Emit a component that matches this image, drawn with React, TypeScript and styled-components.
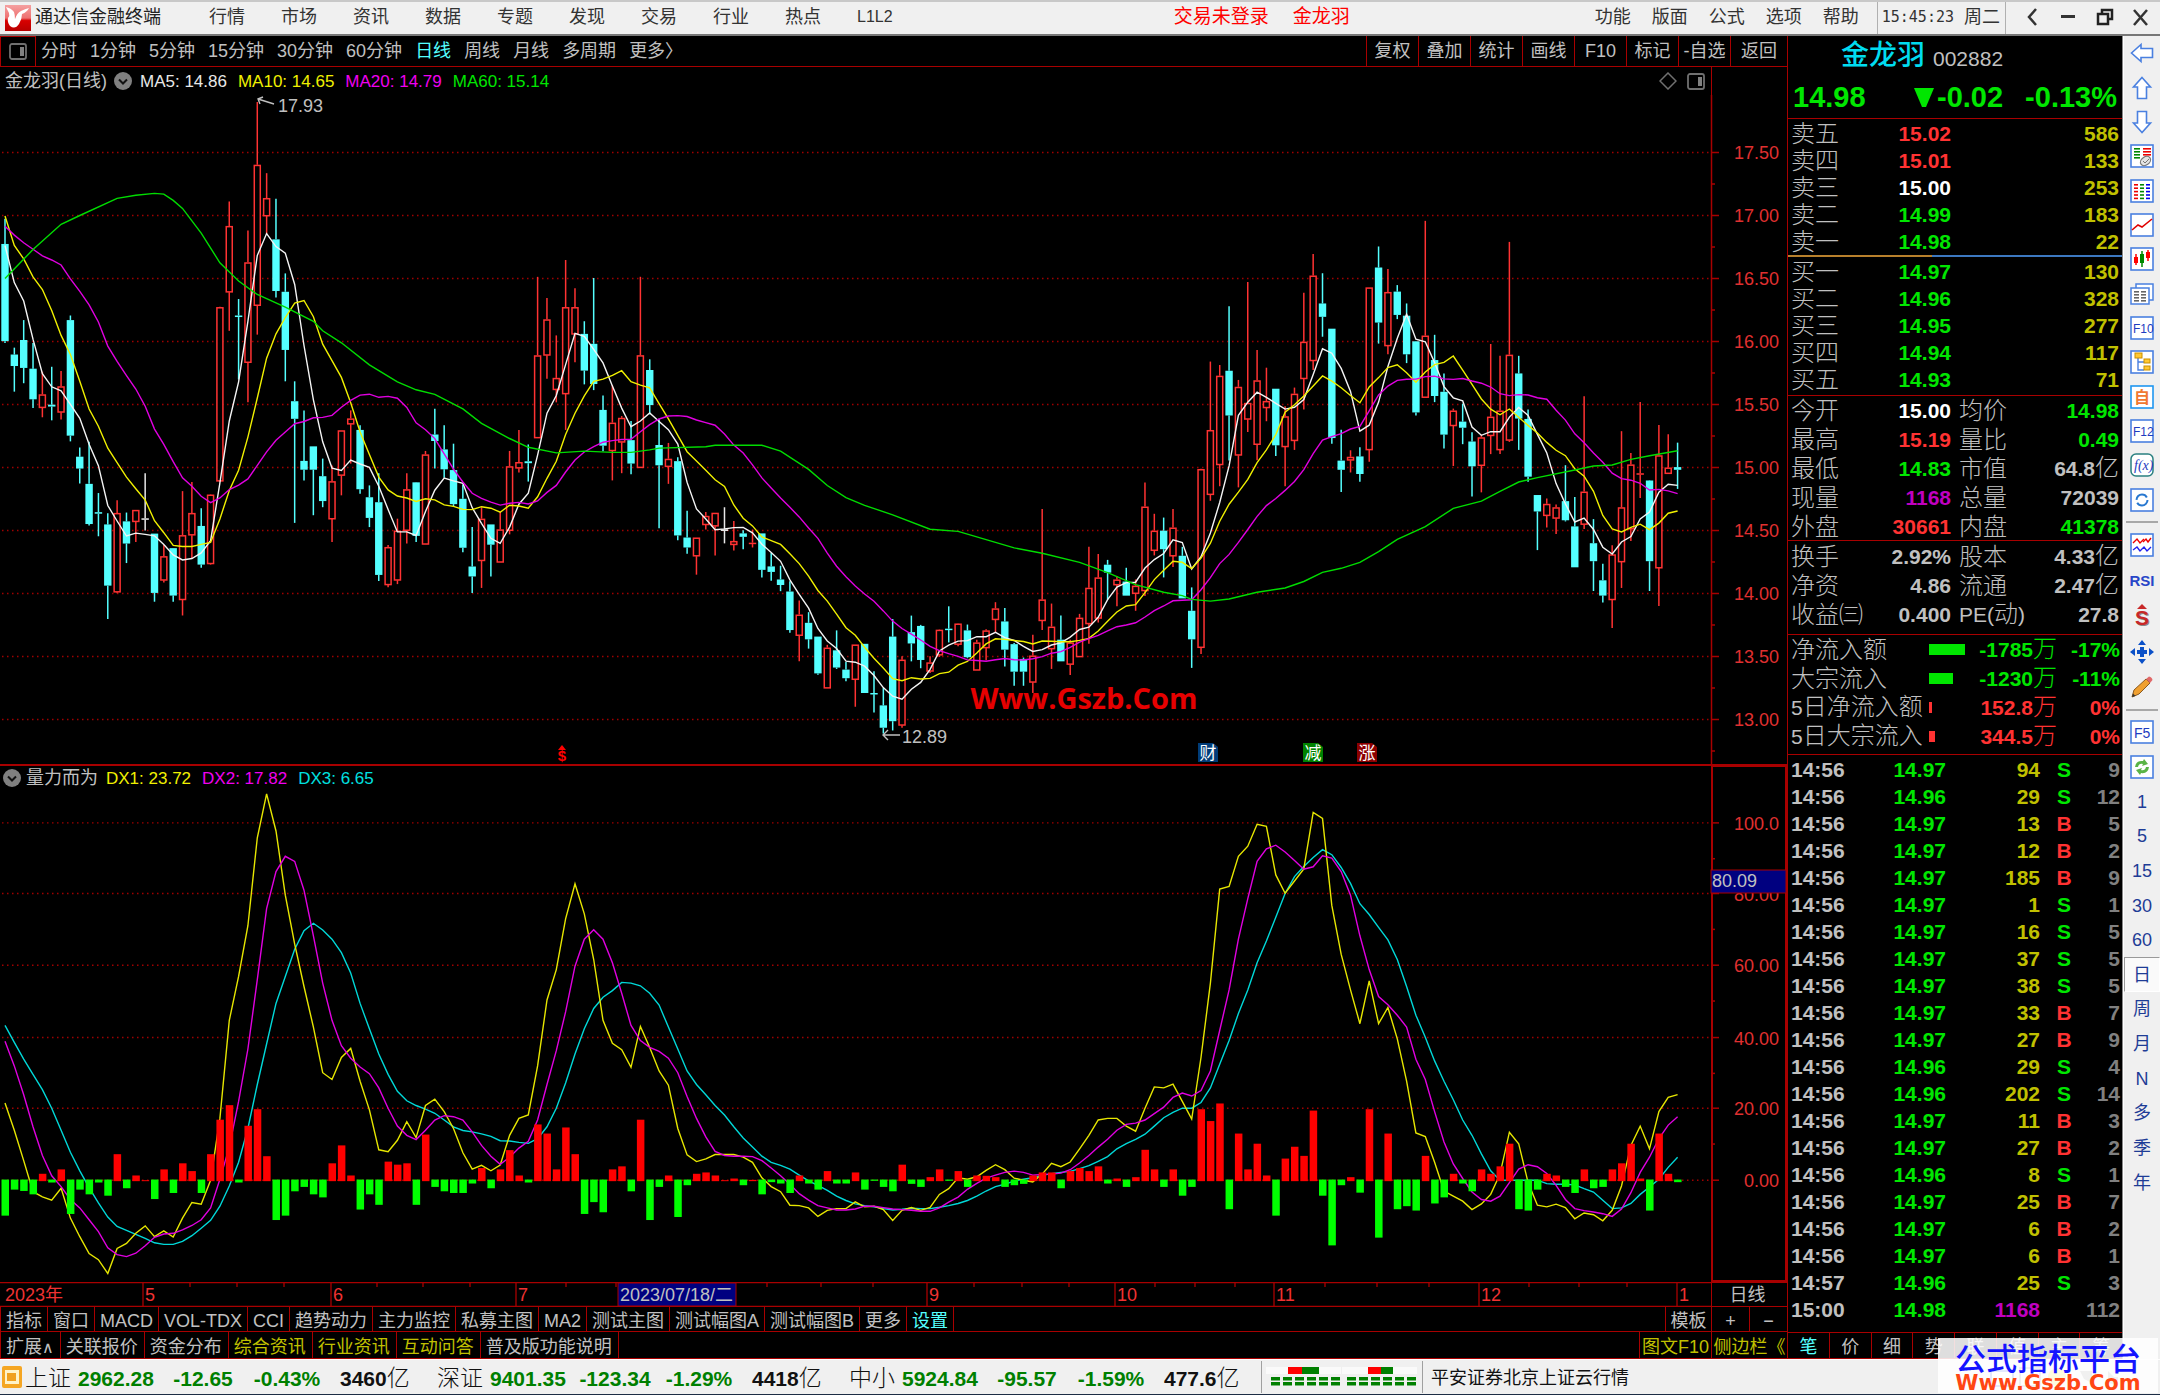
import React from "react";
import styled, { createGlobalStyle } from "styled-components";

/* ---------- palette ---------- */
const C = {
  line: "#a80000",
  red: "#ff3232",
  green: "#00e600",
  yellow: "#c0c000",
  magenta: "#c000c0",
  gray: "#c0c0c0",
  dim: "#808080",
  white: "#ffffff",
  cyan: "#54ffff",
  chrome: "#f0f0f0",
  navy: "#000080",
};
const SANS = `"Liberation Sans", "Noto Sans CJK SC", sans-serif`;

const GlobalStyle = createGlobalStyle`
  * { box-sizing: border-box; }
  body { margin: 0; background: #000; font-family: ${SANS}; font-size: 18px; color: ${C.gray}; }
  button { font: inherit; color: inherit; background: none; border: 0; padding: 0; margin: 0; white-space: nowrap; cursor: pointer; }
  table { border-collapse: collapse; border-spacing: 0; }
  th, td { padding: 0; font-weight: inherit; text-align: left; }
`;

/* ---------- price data ---------- */
// Quotes are kept as ticks below a reference price: [high, body top, body bottom, low, kind].
type Kind = "u" | "d" | "w";
type Quote = [number, number, number, number, Kind];
interface Block { ref: number; origin: number; perUnit: number; quotes: Quote[] }

const BLOCKS: Block[] = [
  {
    ref: 17.5, origin: 162, perUnit: 329.3,
    quotes: [
      [335,401,655,660,"d"],[672,690,720,787,"d"],[600,652,725,765,"d"],[660,727,807,830,"d"],[735,794,829,854,"u"],
      [722,821,826,862,"d"],[733,773,841,860,"u"],[588,600,902,917,"d"],[933,957,988,1027,"d"],[918,1028,1133,1137,"d"],
      [1052,1102,1106,1165,"d"],[1105,1134,1294,1381,"d"],[1071,1104,1311,1314,"u"],[1103,1126,1184,1235,"d"],[1096,1096,1127,1180,"u"],
      [1000,1118,1122,1150,"w"],[1158,1158,1313,1336,"d"],[1188,1217,1280,1286,"u"],[1196,1196,1320,1336,"d"],[1047,1162,1331,1372,"u"],
      [1023,1104,1162,1222,"u"],[1092,1138,1239,1247,"d"],[1055,1056,1237,1239,"u"],[565,566,1021,1023,"u"],[290,354,527,628,"u"],
      [545,588,592,755,"d"],[366,449,711,815,"u"],[30,194,562,638,"u"],[216,281,328,377,"u"],[283,389,524,541,"d"],
      [478,526,678,760,"d"],[760,812,858,1130,"d"],[836,968,991,1019,"d"],[930,930,991,1110,"d"],[962,1008,1073,1089,"d"],
      [980,1021,1120,1180,"u"],[888,888,1006,1058,"u"],[836,857,872,975,"u"],[875,887,1042,1054,"d"],[1032,1063,1117,1141,"d"],
      [1000,1076,1266,1282,"d"],[1188,1193,1292,1298,"u"],[1119,1150,1280,1290,"u"],[1000,1042,1150,1184,"u"],[1023,1024,1164,1180,"d"],
      [942,951,1186,1186,"u"],[832,899,916,988,"d"],[875,938,990,1012,"d"],[923,992,1081,1088,"d"],[1030,1067,1195,1207,"d"],
      [1141,1244,1270,1313,"d"],[1089,1119,1229,1300,"u"],[1134,1134,1187,1270,"d"],[1100,1147,1233,1233,"u"],[942,982,1150,1160,"u"],
      [887,971,987,998,"u"],[925,969,974,1022,"d"],[487,692,908,908,"u"],[542,598,692,753,"u"],[640,751,782,815,"u"],
      [443,566,793,887,"u"],[517,566,637,710,"u"],[603,636,732,768,"d"],[490,662,767,783,"d"],
    ],
  },
  {
    ref: 16.5, origin: 110, perUnit: 366.3,
    quotes: [
      [450,492,596,612,"d"],[420,529,611,697,"u"],[510,515,586,676,"u"],[524,580,648,679,"d"],[105,333,660,660,"u"],
      [345,376,478,505,"d"],[518,594,653,836,"d"],[588,634,657,707,"u"],[630,641,857,871,"d"],[785,863,892,910,"d"],
      [863,863,917,971,"u"],[789,800,826,840,"u"],[791,791,830,915,"u"],[775,839,844,880,"w"],[815,873,884,901,"u"],
      [842,851,861,897,"d"],[840,878,882,892,"u"],[851,851,957,979,"d"],[908,947,963,989,"d"],[945,985,1001,1019,"d"],
      [990,1020,1132,1140,"d"],[1046,1087,1148,1223,"u"],[1080,1111,1159,1186,"d"],[1151,1151,1258,1262,"d"],[1175,1183,1301,1301,"u"],
      [1133,1191,1241,1245,"d"],[1225,1247,1272,1281,"d"],[1174,1174,1276,1355,"u"],[1172,1172,1315,1315,"d"],[1252,1315,1319,1372,"d"],
      [1300,1351,1416,1433,"d"],[1100,1151,1397,1424,"d"],[1208,1218,1409,1416,"u"],[1090,1138,1171,1223,"d"],[1117,1120,1219,1243,"d"],
      [1208,1226,1252,1257,"u"],[1130,1131,1205,1210,"u"],[1063,1128,1132,1168,"d"],[1112,1113,1174,1179,"u"],[1116,1133,1211,1214,"d"],
      [1160,1168,1249,1249,"u"],[1130,1133,1184,1220,"u"],[1051,1069,1102,1140,"u"],[1068,1107,1189,1238,"d"],[1170,1173,1253,1294,"d"],
      [1212,1216,1253,1294,"d"],[1146,1206,1284,1315,"u"],[780,1043,1105,1132,"u"],[1055,1122,1187,1245,"u"],[1090,1160,1223,1223,"d"],
      [1160,1168,1232,1263,"u"],[1085,1096,1210,1210,"u"],[890,1009,1114,1172,"u"],[911,979,1098,1110,"u"],[928,942,965,1044,"d"],
      [975,985,1001,1063,"u"],[951,991,1032,1032,"d"],[985,1003,1026,1076,"u"],[703,773,1018,1033,"u"],[794,843,901,915,"u"],
      [805,843,897,979,"d"],[780,834,917,949,"u"],[890,916,1040,1040,"d"],[1008,1076,1159,1242,"d"],
    ],
  },
  {
    ref: 17, origin: 66, perUnit: 329.5,
    quotes: [
      [728,729,1196,1213,"u"],[448,627,796,812,"u"],[457,485,718,774,"u"],[303,472,589,707,"d"],[496,514,693,777,"u"],
      [240,556,599,632,"u"],[418,497,665,706,"u"],[464,551,569,604,"u"],[519,519,667,695,"d"],[565,591,671,774,"u"],
      [516,532,655,679,"u"],[268,396,493,573,"u"],[167,223,446,470,"u"],[217,296,331,383,"d"],[362,362,648,663,"d"],
      [626,707,731,789,"d"],[680,697,706,738,"u"],[672,696,742,762,"d"],[254,254,679,710,"u"],[147,202,346,401,"d"],
      [206,266,407,429,"u"],[248,265,326,337,"d"],[296,328,429,452,"d"],[394,395,581,589,"d"],[80,380,542,542,"u"],
      [378,444,538,554,"d"],[479,527,639,675,"d"],[571,576,616,721,"u"],[558,605,621,664,"d"],[633,657,722,801,"d"],
      [640,646,720,790,"u"],[402,592,642,690,"u"],[433,576,679,690,"u"],[135,430,654,658,"u"],[433,479,597,679,"d"],
      [573,598,749,762,"d"],[797,797,840,941,"d"],[806,820,851,882,"u"],[822,829,858,899,"u"],[719,813,863,866,"d"],
      [802,879,986,986,"d"],[539,788,874,886,"u"],[860,923,970,1048,"d"],[977,1020,1060,1078,"d"],[928,952,1071,1145,"u"],
      [630,829,972,1040,"u"],[687,717,886,917,"u"],[554,740,744,805,"u"],[758,759,970,1048,"d"],[614,693,988,1087,"u"],
      [638,725,741,741,"u"],[660,724,731,781,"d"],
    ],
  },
];

const toPrice = (b: Block, t: number) => b.ref - (t - b.origin) / b.perUnit;
const candles = BLOCKS.flatMap((b) =>
  b.quotes.map(([h, t, m, l, kind]) => ({
    high: toPrice(b, h), top: toPrice(b, t), bottom: toPrice(b, m), low: toPrice(b, l), kind,
    close: toPrice(b, kind === "u" ? t : m),
  }))
);

// Averages whose window reaches back before the first candle start from stored values.
const average = (n: number, head: number[]) =>
  candles.map((_, i) =>
    i < head.length
      ? toPrice(BLOCKS[0], head[i])
      : candles.slice(i - n + 1, i + 1).reduce((s, c) => s + c.close, 0) / n
  );
const MA5 = average(5, [405, 502, 550, 650]);
const MA10 = average(10, [328, 405, 440, 487, 520, 575, 640, 690, 760]);
const MA20 = average(20, [355, 378, 398, 415, 432, 443, 456, 492, 525, 560, 605, 668, 708, 745, 780, 825, 885, 925, 970]);
const MA60: [number, number][] = [
  [0,16.5],[3,16.73],[6,16.93],[8,17.0],[12,17.136],[14,17.16],[16,17.175],[17,17.17],[18,17.12],[19,17.056],[21,16.86],[23,16.625],
  [25,16.48],[27,16.373],[30,16.273],[33,16.16],[34,16.085],[36,15.99],[39,15.815],[42,15.68],[44,15.617],[46,15.58],[49,15.465],
  [51,15.35],[54,15.23],[56,15.16],[59,15.116],[62,15.13],[65,15.12],[67,15.12],[69,15.14],[70,15.154],[75,15.165],[76,15.176],
  [81,15.176],[83,15.13],[86,14.985],[88,14.857],[90,14.76],[92,14.7],[95,14.624],[99,14.51],[102,14.493],[108,14.362],[111,14.32],
  [115,14.248],[118,14.166],[121,14.07],[124,14.01],[126,13.983],[127,13.953],[129,13.94],[131,13.956],[134,14.01],[137,14.044],
  [139,14.095],[141,14.168],[143,14.2],[145,14.247],[147,14.332],[149,14.43],[152,14.53],[155,14.675],[158,14.733],[160,14.81],
  [162,14.885],[164,14.92],[168,14.98],[170,15.012],[172,15.02],[174,15.064],[176,15.094],[179,15.133],
];

/* ---------- indicator data: ticks down the pane, 1243 is the zero line ---------- */
const DX1 = [
  1015,1095,1185,1277,1292,1302,1267,1355,1410,1460,1478,1519,1445,1430,1400,1378,1410,1393,1411,1355,1309,1314,1243,1060,770,640,490,230,100,210,
  400,545,670,790,925,945,880,853,950,1035,1153,1159,1125,1070,1117,1022,1003,1040,1090,1162,1210,1199,1215,1198,1110,1060,1050,905,710,620,
  470,366,455,590,770,838,857,909,788,850,920,962,1090,1168,1188,1180,1167,1167,1167,1175,1190,1236,1262,1277,1317,1318,1325,1350,1332,1327,
  1327,1307,1322,1320,1330,1362,1332,1324,1332,1323,1285,1268,1236,1240,1233,1214,1197,1212,1237,1243,1248,1225,1193,1203,1189,1150,1110,1065,1060,1060,
  1083,1098,1030,967,970,959,1010,1062,880,660,382,374,285,255,190,196,340,394,358,322,155,173,430,575,680,780,653,780,732,825,
  950,1103,1114,1190,1275,1290,1305,1330,1313,1285,1225,1101,1135,1250,1317,1322,1314,1324,1357,1340,1345,1363,1332,1260,1140,1083,1150,1040,998,990,
];
const DX2 = [
  832,905,990,1085,1170,1230,1262,1300,1325,1360,1395,1443,1463,1469,1459,1437,1412,1402,1400,1390,1377,1360,1325,1240,1145,1010,855,650,440,330,
  285,300,385,520,660,770,845,882,908,928,970,1030,1083,1110,1123,1095,1065,1052,1055,1065,1100,1140,1172,1196,1175,1148,1128,1065,960,860,
  745,610,530,502,530,600,690,785,830,850,862,882,925,995,1060,1115,1158,1170,1172,1172,1173,1185,1207,1230,1255,1283,1302,1318,1325,1331,
  1331,1328,1320,1320,1324,1328,1330,1332,1335,1335,1325,1308,1293,1270,1252,1237,1228,1220,1216,1220,1228,1226,1225,1222,1212,1192,1170,1145,1122,1095,
  1078,1074,1065,1046,1027,998,985,994,978,920,800,680,530,410,300,263,252,272,297,323,316,283,290,330,400,520,620,700,724,755,
  790,885,945,1040,1130,1195,1238,1278,1300,1305,1290,1250,1210,1197,1203,1223,1258,1300,1327,1333,1337,1342,1350,1328,1280,1220,1175,1120,1080,1055,
];
const DX3 = [
  785,835,885,930,975,1030,1095,1160,1215,1265,1310,1352,1380,1391,1403,1415,1428,1433,1433,1424,1407,1385,1362,1320,1260,1190,1090,960,840,720,
  640,560,505,483,503,530,570,630,720,795,870,930,980,1008,1022,1033,1045,1065,1085,1096,1100,1106,1113,1126,1127,1131,1134,1120,1085,1030,
  955,870,795,735,702,682,658,660,668,690,725,790,855,920,960,990,1022,1050,1085,1118,1145,1172,1190,1199,1210,1228,1245,1258,1273,1290,
  1303,1313,1318,1322,1327,1331,1329,1326,1327,1327,1323,1318,1312,1303,1290,1275,1262,1255,1245,1240,1236,1228,1224,1220,1217,1209,1200,1187,1173,1150,
  1135,1122,1107,1083,1058,1042,1030,1030,1013,970,900,830,750,680,600,535,465,395,345,315,288,265,280,318,365,425,457,495,532,590,
  670,755,820,890,950,1005,1065,1110,1165,1215,1243,1243,1243,1243,1243,1253,1255,1255,1257,1268,1278,1302,1327,1325,1312,1285,1263,1240,1205,1175,
];
const FLOW = [
  -105,-28,-32,-42,20,-7,33,-100,-28,-42,-7,-46,78,-24,15,1,-56,33,-38,51,28,-38,78,180,223,-7,162,211,72,-118,
  -105,-33,-20,-42,-51,51,104,15,-87,-42,-73,56,47,51,-73,136,-20,-33,-38,-38,-10,37,-24,33,90,15,-7,166,139,33,
  157,78,-100,-65,-95,33,42,-33,180,-118,-20,15,-109,-15,20,24,15,1,6,-15,2,-42,-6,-10,-38,15,-10,-28,28,-10,
  -10,24,-28,-2,-20,-33,47,-11,-20,10,33,-2,28,-20,15,14,10,-20,-15,-11,15,24,24,-24,28,37,28,42,-10,6,
  -20,10,91,33,-20,33,-46,-20,211,176,228,-86,139,33,109,15,-105,65,100,73,207,-46,-193,-15,10,-37,211,-170,139,-86,
  -77,-90,73,-69,-51,20,-10,-33,33,20,42,109,-86,-90,-28,20,15,-20,-38,33,-24,-20,33,51,109,6,-90,139,20,-6,
];

/* ---------- chart geometry ---------- */
const AXIS_X = 1711;
const xAt = (i: number) => 5 + i * 9.344;
const priceY = (p: number) => 152.5 + (17.5 - p) * 126;
const tickY = (t: number) => 760 + t / 2.958;
const path = (pts: [number, number][]) => pts.map(([x, y]) => `${x.toFixed(1)},${y.toFixed(1)}`).join(" ");
const priceLine = (v: number[]) => path(v.map((p, i) => [xAt(i), priceY(p)]));
const tickLine = (v: number[]) => path(v.map((t, i) => [xAt(i), tickY(t)]));

/* ---------- styled parts ---------- */
const Page = styled.div`display: flex; flex-direction: column; min-height: 100vh; background: #000;`;

const TitleBar = styled.header`
  display: flex; align-items: center; height: 36px; padding-left: 5px; color: #333; line-height: 28px;
  background: ${C.chrome}; border-top: 2px solid #c8c8c8; border-bottom: 2px solid #777; white-space: nowrap;
`;
const TitleText = styled.div`display: flex; align-items: center; flex: 1; padding-bottom: 2px;`;
const AppName = styled.span`margin: 0 48px 0 4px; color: #222;`;
const Menu = styled.nav<{ $gap: number }>`display: flex; gap: ${(p) => p.$gap}px;`;
const SmallButton = styled.button`font-size: 16px;`;
const Alerts = styled.div`display: flex; gap: 24px; margin-left: auto; margin-right: 245px; color: #f00; font-size: 19px;`;
const Clock = styled.time`
  display: flex; align-items: center; gap: 10px; height: 32px; margin-left: 18px; padding: 0 5px 2px 4px; border: solid #b0b0b0; border-width: 0 1px;
  font-family: "DejaVu Sans Mono", "Noto Sans CJK SC", monospace; font-size: 15px;
  span { font-size: 18px; }
`;
const WindowButtons = styled.div`
  display: flex; width: 154px; padding: 0 1px 2px 8px; justify-content: space-between;
  button { display: grid; place-items: center; width: 36px; height: 30px; }
`;

const Body = styled.div`display: grid; grid-template-columns: minmax(0, 1fr) 336px 37px; flex: 1;`;
const Main = styled.main`display: flex; flex-direction: column; min-width: 0;`;

const Toolbar = styled.div`display: flex; height: 31px; border-bottom: 1px solid ${C.line};`;
const SideToggle = styled.button`display: grid; place-items: center; width: 36px; border: 1px solid ${C.line}; border-bottom: 0;`;
const Periods = styled.div`display: flex; gap: 13px; padding-left: 5px; flex: 1;`;
const Period = styled.button<{ $on?: boolean }>`line-height: 30px; color: ${(p) => (p.$on ? C.cyan : C.gray)};`;
const Tools = styled.div`
  display: flex;
  button { width: 52px; border-left: 1px solid ${C.line}; line-height: 30px; }
  button:last-child { width: 57px; }
`;

const Legend = styled.div<{ $h: number }>`
  display: flex; height: ${(p) => p.$h}px; line-height: ${(p) => p.$h}px; font-size: 17px; white-space: nowrap;
`;
const LegendText = styled.div`display: flex; align-items: baseline; gap: 11px; flex: 1; min-width: 0;`;
const LegendTitle = styled.span<{ $gap: number }>`
  display: flex; align-items: baseline; gap: ${(p) => p.$gap}px; padding-left: ${(p) => p.$gap - 2}px; font-size: 18px; margin-right: -3px;
  svg { align-self: center; }
`;
const Tint = styled.span<{ $c: string }>`color: ${(p) => p.$c};`;
const LegendIcons = styled.div`display: flex; align-items: center; gap: 10px; padding-right: 6px;`;
const AxisHead = styled.div<{ $boxed?: boolean }>`
  width: 76px; border-left: ${(p) => (p.$boxed ? 2 : 1)}px solid ${C.line};
  ${(p) => p.$boxed && `border-top: 1px solid ${C.line}; border-right: 2px solid ${C.line};`}
`;
const Pane = styled.section`border-bottom: 2px solid ${C.line};`;
const SubPane = styled.section``;
const Plot = styled.svg`
  display: block; width: 100%; height: auto; font-family: ${SANS}; font-size: 18px;
`;
const DateRow = styled.div`
  display: grid; grid-template-columns: minmax(0, 1fr) 76px;
  button { border: solid ${C.line}; border-width: 1px 0 1px 1px; line-height: 22px; padding: 1px 4px 0 0; }
`;

const TabRow = styled.div<{ $h: number; $pad: string }>`
  display: flex; height: ${(p) => p.$h}px; border-bottom: 1px solid ${C.line}; border-left: 1px solid ${C.line};
  button { padding: ${(p) => p.$pad}; border-right: 1px solid ${C.line}; line-height: ${(p) => p.$h - 5}px; }
`;
const Tab = styled.button<{ $c?: string }>`color: ${(p) => p.$c || C.gray};`;
const Caret = styled.span`font-family: "DejaVu Sans", sans-serif; font-size: 16px;`;
const TabEnd = styled.div<{ $cols: string }>`
  display: grid; grid-template-columns: ${(p) => p.$cols}; margin-left: auto;
  button { padding: 4px 0 0; border-right: 0; border-left: 1px solid ${C.line}; }
`;

const Quote = styled.aside`
  position: relative; display: flex; flex-direction: column; border-left: 1px solid ${C.line}; border-right: 1px solid #888;
  font-size: 21px; font-weight: bold;
`;
const StockHead = styled.div`height: 83px; border-bottom: 1px solid ${C.line}; color: ${C.green}; padding: 0 5px;`;
const StockName = styled.h1`
  display: flex; align-items: center; gap: 8px; margin: 0 0 0 48px; height: 39px; line-height: 37px; font-size: 28px; font-weight: 500; color: #00dcf0;
  small { font-size: 21px; color: ${C.gray}; padding-top: 6px; }
`;
const LastPrice = styled.div`
  display: flex; gap: 22px; align-items: center; height: 44px; padding-top: 1px; font-size: 29px;
  span { display: flex; align-items: center; }
  span:first-child { margin-right: auto; }
  svg { margin-right: 3px; }
`;
const Grid = styled.table<{ $row: number }>`
  width: 100%; table-layout: fixed;
  tr { height: ${(p) => p.$row}px; }
  td, th { line-height: 26px; white-space: nowrap; overflow: visible; }
`;
const Label = styled.th`&& { padding-left: 3px; font-size: 24px; font-weight: 300; color: ${C.gray}; b { font-size: 21px; } }`;
const FactLabel = styled(Label)`&& { padding-left: 8px; }`;
const Num = styled.td<{ $c?: string; $pad?: number }>`
  && { text-align: right; color: ${(p) => p.$c || C.gray}; padding-right: ${(p) => p.$pad ?? 3}px; font-weight: bold; }
  span { font-size: 24px; font-weight: 300; }
`;
const Side = styled.td<{ $c: string }>`&& { padding-left: 4px; text-align: center; color: ${(p) => p.$c}; }`;
const Time = styled.td`&& { padding-left: 3px; color: ${C.gray}; }`;
const Section = styled.div<{ $h: number; $top?: number }>`
  height: ${(p) => p.$h}px; padding-top: ${(p) => p.$top || 0}px; border-bottom: 1px solid ${C.line};
`;
const AskBox = styled.div`height: 136px; padding-top: 1px;`;
const DepthLine = styled.div`height: 2px; background: linear-gradient(to right, #b8802c 43%, #3c78c0 43%);`;
const FlowBar = styled.div<{ $c: string }>`height: 11px; background: ${(p) => p.$c};`;
const Ticks = styled.div`flex: 1; padding-top: 1px;`;
const QuoteTabs = styled.div`
  display: grid; grid-template-columns: repeat(8, 1fr); height: 27px; border: solid ${C.line}; border-width: 1px 0; font-size: 18px; font-weight: normal;
  button { border-right: 1px solid ${C.line}; line-height: 21px; padding-top: 4px; }
  button:first-child { color: ${C.cyan}; }
  button:last-child { border-right: 0; }
`;

const IconBar = styled.nav`background: ${C.chrome}; border-left: 1px solid #fff; color: #1e3c96;`;
const IconGroup = styled.div<{ $h: number }>`
  display: grid; grid-auto-rows: 1fr; height: ${(p) => p.$h}px;
`;
const Rule = styled.hr`height: 2px; margin: 4px 2px; border: 0; background: #a8a8a8;`;
const BarButton = styled.button<{ $on?: boolean }>`
  && { display: grid; place-items: center; line-height: 24px; }
  ${(p) => p.$on && `background: #fafafa; border: 1px solid #999; border-right-color: #fff; border-bottom-color: #fff;`}
`;

const StatusBar = styled.footer`
  display: flex; align-items: center; height: 36px; padding-left: 2px; color: #111; background: ${C.chrome};
  border-top: 1px solid #fff; border-bottom: 1px solid #1c2c44; white-space: nowrap;
`;
const StatusButton = styled.button`display: grid; margin-right: 3px;`;
const Index = styled.div`
  display: grid; align-items: baseline; grid-template-columns: 53px 84px 82px 86px 107px; line-height: 28px; padding-top: 2px;
  font-size: 21px; font-weight: bold;
  > :first-child, small { font-size: 23px; font-weight: 300; }
`;
const Down = styled.span<{ $mid?: boolean }>`color: #008000; text-align: ${(p) => (p.$mid ? "center" : "left")};`;
const Turnover = styled.span`padding-left: 10px;`;
const Meters = styled.div`display: flex; align-items: center; height: 32px; padding: 0 4px; border: solid #a0a0a0; border-width: 0 1px;`;
const Feed = styled.span`padding: 2px 0 0 8px; line-height: 28px;`;
const Tray = styled.svg`margin-left: auto; margin-right: 20px;`;
const Watermark = styled.div`
  position: absolute; right: 2px; bottom: 2px; width: 220px; height: 55px; padding-top: 3px; background: rgba(255, 255, 255, 0.87); text-align: center;
  font: bold 21px/22px "DejaVu Sans", sans-serif; color: #ff4614;
  div { font: 500 31px/31px "Noto Sans CJK SC", sans-serif; color: #1414ff; }
`;
const Frame = styled.div`position: relative;`;

/* ---------- small drawings ---------- */
const Logo = () => (
  <svg width="26" height="26" viewBox="0 0 26 26">
    <defs><linearGradient id="lg" x1="0" y1="0" x2="0" y2="1"><stop offset="0" stopColor="#f4a0a0" /><stop offset="0.5" stopColor="#ee7070" /><stop offset="0.6" stopColor="#d80000" /><stop offset="1" stopColor="#b80000" /></linearGradient></defs>
    <rect width="26" height="26" fill="url(#lg)" />
    <path d="M1 2 Q6 3 9 7 Q10 10 10 14 Q12 8 16 6 Q20 4 24 3 Q22 7 17 9 Q17 14 14 19 Q10 25 5 21 Q2 17 3 13 Q5 11 4 8 Z" fill="#fff" />
  </svg>
);
const Chevron = () => (
  <svg width="18" height="18" viewBox="0 0 18 18"><circle cx="9" cy="9" r="9" fill="#808080" /><path d="M5 7.5 L9 11.5 L13 7.5" fill="none" stroke="#111" strokeWidth="2" /></svg>
);
const PanelIcon = () => (
  <svg width="18" height="17" viewBox="0 0 18 17"><rect x="1" y="1" width="16" height="15" rx="2" fill="none" stroke="#707070" strokeWidth="1.800" /><rect x="11" y="4" width="4" height="9" fill="#808080" /></svg>
);
const Diamond = () => (
  <svg width="18" height="18" viewBox="0 0 18 18"><path d="M9 1 L17 9 L9 17 L1 9 Z" fill="none" stroke="#707070" strokeWidth="1.5" /></svg>
);
const Boxed = ({ children, c = "#4a80e0" }: { children?: React.ReactNode; c?: string }) => (
  <svg width="24" height="24" viewBox="0 0 24 24" fontFamily="Liberation Sans, Noto Sans CJK SC, sans-serif">
    <rect x="1" y="1" width="22" height="22" fill="#fff" stroke={c} strokeWidth="1.6" />{children}
  </svg>
);
const Arrow = ({ r }: { r: number }) => (
  <svg width="24" height="24" viewBox="0 0 24 24"><path transform={`rotate(${r} 12 12)`} d="M12 1.5 L20.5 11 H16.5 V22.5 H7.5 V11 H3.5 Z" fill="#fff" stroke="#4a80e0" strokeWidth="1.6" /></svg>
);
const rows = (x: number, w: number, c: string, n = 5, y0 = 5, dy = 3.4) =>
  Array.from({ length: n }, (_, k) => <rect key={`${x}-${k}`} x={x} y={y0 + k * dy} width={w} height="1.6" fill={c} />);

const TOP_ICONS: [string, React.ReactNode][] = [
  ["后退", <Arrow r={-90} />],
  ["上一个", <Arrow r={0} />],
  ["下一个", <Arrow r={180} />],
  ["自选报价", <Boxed>{rows(4, 6, "#080", 4, 4, 3)}{rows(13, 8, "#e00", 3, 4, 3)}<ellipse cx="15.500" cy="17" rx="5.500" ry="4" transform="rotate(-35 15.500 17)" fill="#e4e4e4" stroke="#777" strokeWidth="1.2" /><path d="M13 17 l2 2 l4 -4" fill="none" stroke="#777" /></Boxed>],
  ["报价表", <Boxed>{rows(4, 4, "#e00")}{rows(10, 4, "#080")}{rows(16, 4, "#00e")}</Boxed>],
  ["分时图", <Boxed><path d="M2 17 L8 12 L12 14 L22 6" fill="none" stroke="#e00000" strokeWidth="1.6" /></Boxed>],
  ["K线图", <Boxed><path d="M6 7 V18 M18 3 V14" stroke="#f00" strokeWidth="1.500" /><path d="M12 4 V20" stroke="#080" strokeWidth="1.500" /><rect x="4" y="10" width="4" height="6" fill="#f00" /><rect x="16" y="5" width="4" height="6" fill="#f00" /><rect x="10" y="7" width="4" height="9" fill="#080" /></Boxed>],
  ["多股同列", <svg width="24" height="24" viewBox="0 0 24 24"><rect x="6" y="2" width="17" height="16" fill="#fff" stroke="#4a80e0" strokeWidth="1.500" /><rect x="1" y="6" width="18" height="16" fill="#fff" stroke="#4a80e0" strokeWidth="1.500" />{rows(4, 5, "#666", 4, 9, 3)}{rows(11, 5, "#666", 4, 9, 3)}</svg>],
  ["F10资料", <Boxed><text x="3" y="17" fontSize="12" fill="#1e3cc0">F10</text></Boxed>],
  ["板块树", <Boxed><path d="M8 7 V20 H14 M8 12 H14" fill="none" stroke="#4a80e0" strokeWidth="1.400" /><rect x="5" y="3" width="7" height="5" fill="#ffc832" stroke="#c89000" /><rect x="14" y="9" width="6" height="4" fill="#ffc832" stroke="#c89000" /><rect x="14" y="16" width="6" height="4" fill="#ffc832" stroke="#c89000" /></Boxed>],
  ["自选股", <Boxed c="#1e96f0"><text x="4" y="18" fontSize="16" fontWeight="bold" fill="#f07832">自</text></Boxed>],
  ["F12委托", <Boxed><text x="3" y="17" fontSize="12" fill="#1e3cc0">F12</text></Boxed>],
  ["公式管理", <svg width="24" height="24" viewBox="0 0 24 24"><rect x="1" y="1" width="22" height="22" rx="5" fill="#fff" stroke="#2a8080" strokeWidth="1.500" /><text x="4" y="17" fontSize="14" fontStyle="italic" fill="#1e3cc0" fontFamily="Liberation Serif, serif">f(x)</text></svg>],
  ["切换", <Boxed><circle cx="12" cy="12" r="5.500" fill="none" stroke="#2878d0" strokeWidth="2" strokeDasharray="14 3" /></Boxed>],
];
const MID_ICONS: [string, React.ReactNode][] = [
  ["多图叠加", <Boxed><path d="M3 10 L7 6 L10 10 L14 6" fill="none" stroke="#e00" strokeWidth="1.400" /><path d="M13 9 L16 6 L18 9 L21 5" fill="none" stroke="#e00" strokeWidth="1.400" /><path d="M3 17 L7 14 L10 18 L14 14 L17 18 L21 14" fill="none" stroke="#22e" strokeWidth="1.400" /></Boxed>],
  ["RSI指标", <svg width="28" height="20" viewBox="0 0 28 20"><text x="14" y="16" textAnchor="middle" fontSize="15" fontWeight="bold" fill="#2846c8" fontFamily="Liberation Sans, sans-serif">RSI</text></svg>],
  ["筹码", <svg width="24" height="26" viewBox="0 0 24 26"><path d="M12 1 L17 6 H7 Z" fill="#c82828" /><text x="6" y="23" fontSize="21" fontWeight="bold" fill="#888" fontFamily="Liberation Sans, sans-serif">S</text><text x="5" y="22" fontSize="21" fontWeight="bold" fill="#c82828" fontFamily="Liberation Sans, sans-serif">S</text></svg>],
  ["移动", <svg width="24" height="24" viewBox="0 0 24 24" fill="#0a50c8"><path d="M12 0 L16 5 H8 Z M12 24 L16 19 H8 Z M0 12 L5 8 V16 Z M24 12 L19 8 V16 Z" /><path d="M10 7 H14 V10 H17 V14 H14 V17 H10 V14 H7 V10 H10 Z" /></svg>],
  ["画线工具", <svg width="24" height="24" viewBox="0 0 24 24"><path d="M2 22 L4 15 L16 4 L20 8 L9 19 Z" fill="#f0a030" stroke="#8a5a20" /><path d="M16 4 L19 1.500 Q22 2 22.500 5 L20 8 Z" fill="#e06868" /><path d="M2 22 L3 18.500 L5.500 21 Z" fill="#333" /></svg>],
];
const LOW_ICONS: [string, React.ReactNode][] = [
  ["F5切换", <Boxed><text x="4" y="18" fontSize="14" fill="#1e3cc0">F5</text></Boxed>],
  ["刷新", <Boxed><path d="M5 12 Q6 5 13 6 L14 4 L18 9 L12 11 L13 9 Q9 8 8 12 Z" fill="#5ab446" /><path d="M19 12 Q18 19 11 18 L10 20 L6 15 L12 13 L11 15 Q15 16 16 12 Z" fill="#5ab446" /></Boxed>],
];

/* ---------- charts ---------- */
const GridLine = ({ y }: { y: number }) => (
  <line x1="2" x2={AXIS_X} y1={y} y2={y} stroke="#a00000" strokeWidth="1.400" strokeDasharray="1.500 3.500" />
);

const Event = ({ x, c, t }: { x: number; c: string; t: string }) => (
  <g><path d={`M${x - 10} 743 h15 l5 4 v15 h-20 z`} fill={c} /><text x={x} y={759} textAnchor="middle" fontSize="17" fill="#fff">{t}</text></g>
);

function PriceChart() {
  const labels = [17.5, 17, 16.5, 16, 15.5, 15, 14.5, 14, 13.5, 13];
  return (
    <Plot viewBox="0 95 1787 669" role="img" aria-label="日线K线图">
      {labels.map((p) => <GridLine key={p} y={priceY(p)} />)}
      <line x1={AXIS_X + 0.5} x2={AXIS_X + 0.5} y1="95" y2="764" stroke={C.line} strokeWidth="1.500" />
      {labels.map((p) => (
        <g key={p}>
          <line x1={AXIS_X} x2={AXIS_X + 8} y1={priceY(p)} y2={priceY(p)} stroke={C.line} strokeWidth="1.500" />
          <line x1={AXIS_X} x2={AXIS_X + 4} y1={priceY(p - 0.25)} y2={priceY(p - 0.25)} stroke={C.line} strokeWidth="1.500" />
          <text x="1779" y={priceY(p) + 6} textAnchor="end" fill="#e03030">{p.toFixed(2)}</text>
        </g>
      ))}
      {candles.map((c, i) => {
        const x = xAt(i);
        const col = c.kind === "u" ? C.red : c.kind === "d" ? C.cyan : "#e8e8e8";
        const top = priceY(c.top), bottom = priceY(c.bottom);
        const flat = bottom - top < 2;
        return (
          <g key={i} stroke={col} strokeWidth="1.500">
            <line x1={x} x2={x} y1={priceY(c.high)} y2={top} />
            <line x1={x} x2={x} y1={bottom} y2={priceY(c.low)} />
            {c.kind === "u" && !flat
              ? <rect x={x - 3} y={top + 0.7} width="6" height={Math.max(1, bottom - top - 1)} fill="#000" />
              : <rect x={x - 3.7} y={top} width="7.400" height={Math.max(1.5, bottom - top)} fill={col} stroke="none" />}
          </g>
        );
      })}
      <g fill="none" strokeWidth="1.400">
        <polyline points={priceLine(MA5)} stroke="#f4f4f4" />
        <polyline points={priceLine(MA10)} stroke="#f0f000" />
        <polyline points={priceLine(MA20)} stroke="#e000e0" />
        <polyline points={path(MA60.map(([i, p]) => [xAt(i), priceY(p)]))} stroke="#00dc00" />
      </g>
      <g stroke={C.gray} strokeWidth="1.400" fill="none">
        <path d="M274 104 L258 99 M263 97 L258 99 L260 104" />
        <path d="M900 735 H883 M888 730 L883 735 L888 740" />
      </g>
      <text x="278" y="112" fill={C.gray}>17.93</text>
      <text x="902" y="743" fill={C.gray}>12.89</text>
      <text x="1084" y="709" textAnchor="middle" fill="#e60000" fontSize="29" fontWeight="bold" fontFamily="Open Sans, sans-serif">Www.Gszb.Com</text>
      <path d="M562 745 l4 5 h-8 z" fill="#f00" />
      <text x="562" y="761" textAnchor="middle" fontSize="15" fontWeight="bold" fill="#f00">$</text>
      <Event x={1208} c="#003c78" t="财" />
      <Event x={1313} c="#008200" t="减" />
      <Event x={1367} c="#8c0000" t="涨" />
    </Plot>
  );
}

function IndicatorChart() {
  const levels: [number, string][] = [[186, "100.0"], [395, "80.00"], [607, "60.00"], [821, "40.00"], [1030, "20.00"], [1243, "0.00"]];
  return (
    <Plot viewBox="0 790 1787 492" role="img" aria-label="量力而为指标">
      {levels.map(([t]) => <GridLine key={t} y={tickY(t)} />)}
      <g fill="none" strokeWidth="1.400">
        <polyline points={tickLine(DX3)} stroke="#00d8d8" />
        <polyline points={tickLine(DX1)} stroke="#e6e600" />
        <polyline points={tickLine(DX2)} stroke="#e000e0" />
      </g>
      {FLOW.map((v, i) => (
        <rect key={i} x={xAt(i) - 3.5} width="7.500" y={v > 0 ? tickY(1244 - v) : tickY(1241)} height={Math.abs(v) / 2.958 + 0.6} fill={v > 0 ? "#f00" : "#0f0"} />
      ))}
      <path d="M1712 790 V1281 H1786 V790" fill="none" stroke={C.line} strokeWidth="2" />
      {levels.map(([t, s]) => (
        <g key={s}>
          <line x1={AXIS_X} x2={AXIS_X + 8} y1={tickY(t)} y2={tickY(t)} stroke={C.line} strokeWidth="1.500" />
          {t < 1200 && <line x1={AXIS_X} x2={AXIS_X + 4} y1={tickY(t + 106)} y2={tickY(t + 106)} stroke={C.line} strokeWidth="1.500" />}
          <text x="1779" y={tickY(t) + 7} textAnchor="end" fill="#e03030">{s}</text>
        </g>
      ))}
      <rect x="1711" y="870" width="75" height="23" fill={C.navy} stroke={C.line} />
      <text x="1712" y="887" fill={C.gray}>80.09</text>
    </Plot>
  );
}

const MONTHS: [number, string][] = [[143, "5"], [331, "6"], [516, "7"], [927, "9"], [1115, "10"], [1274, "11"], [1479, "12"], [1677, "1"]];
const WEEKS = [190, 237, 284, 377, 423, 470, 566, 616, 767, 821, 873, 974, 1022, 1069, 1155, 1195, 1235, 1325, 1377, 1429, 1529, 1579, 1627];
const DateAxis = () => (
  <Plot viewBox="0 1282 1711 25" role="img" aria-label="日期轴">
    <path d={`M0 1282.700 H1711 M0 1306.500 H1711 ${WEEKS.map((x) => `M${x} 1283 v4`).join(" ")} ${MONTHS.map(([x]) => `M${x} 1283 v24`).join(" ")}`} stroke={C.line} strokeWidth="1.300" />
    <text x="5" y="1301" fill="#f03232">2023年</text>
    {MONTHS.map(([x, m]) => <text key={m} x={x + 2} y="1301" fill="#f03232">{m}</text>)}
    <rect x="618" y="1283" width="118" height="23" fill={C.navy} stroke={C.line} />
    <text x="620" y="1301" fill={C.gray}>2023/07/18/二</text>
  </Plot>
);

/* ---------- quote panel data ---------- */
const ASKS = [["卖五", "15.02", C.red, "586"], ["卖四", "15.01", C.red, "133"], ["卖三", "15.00", C.white, "253"], ["卖二", "14.99", C.green, "183"], ["卖一", "14.98", C.green, "22"]];
const BIDS = [["买一", "14.97", C.green, "130"], ["买二", "14.96", C.green, "328"], ["买三", "14.95", C.green, "277"], ["买四", "14.94", C.green, "117"], ["买五", "14.93", C.green, "71"]];
const DAY = [
  ["今开", "15.00", C.white, "均价", "14.98", C.green],
  ["最高", "15.19", C.red, "量比", "0.49", C.green],
  ["最低", "14.83", C.green, "市值", "64.8亿", C.gray],
  ["现量", "1168", C.magenta, "总量", "72039", C.gray],
  ["外盘", "30661", C.red, "内盘", "41378", C.green],
];
const BASICS = [
  ["换手", "2.92%", C.gray, "股本", "4.33亿", C.gray],
  ["净资", "4.86", C.gray, "流通", "2.47亿", C.gray],
  ["收益㈢", "0.400", C.gray, "PE(动)", "27.8", C.gray],
];
const FLOWS: [string, number, string, string, string][] = [
  ["净流入额", 36, "-1785", "-17%", C.green],
  ["大宗流入", 24, "-1230", "-11%", C.green],
  ["5日净流入额", 3, "152.8", "0%", C.red],
  ["5日大宗流入", 6, "344.5", "0%", C.red],
];
const TRADES = `14.97 94 S 9|14.96 29 S 12|14.97 13 B 5|14.97 12 B 2|14.97 185 B 9|14.97 1 S 1|14.97 16 S 5|14.97 37 S 5|14.97 38 S 5|14.97 33 B 7|14.97 27 B 9|14.96 29 S 4|14.96 202 S 14|14.97 11 B 3|14.97 27 B 2|14.96 8 S 1|14.97 25 B 7|14.97 6 B 2|14.97 6 B 1|14.96 25 S 3|14.98 1168 - 112`
  .split("|").map((r, i) => [i < 19 ? "14:56" : i === 19 ? "14:57" : "15:00", ...r.split(" ")]);

const withUnit = (s: string) => (s.endsWith("亿") ? <>{s.slice(0, -1)}<span>亿</span></> : s);
// Latin letters, digits and brackets inside a label are set in the figure face.
const mixed = (s: string) => s.split(/([A-Z0-9()]+)/).map((t, i) => (i % 2 ? <b key={i}>{t}</b> : t));

const Depth = ({ data, label }: { data: string[][]; label: string }) => (
  <Grid $row={27} aria-label={label}>
    <colgroup><col /><col style={{ width: 110 }} /><col style={{ width: 171 }} /></colgroup>
    <tbody>
      {data.map(([l, p, c, v]) => <tr key={l}><Label scope="row">{l}</Label><Num $c={c} $pad={0}>{p}</Num><Num $c={C.yellow}>{v}</Num></tr>)}
    </tbody>
  </Grid>
);
const Facts = ({ data, label }: { data: string[][]; label: string }) => (
  <Grid $row={29} aria-label={label}>
    <colgroup><col style={{ width: 78 }} /><col style={{ width: 85 }} /><col style={{ width: 78 }} /><col /></colgroup>
    <tbody>
      {data.map(([a, v, c, b, w, d]) => (
        <tr key={a}><Label scope="row">{a}</Label><Num $c={c} $pad={0}>{v}</Num><FactLabel scope="row">{mixed(b)}</FactLabel><Num $c={d}>{withUnit(w)}</Num></tr>
      ))}
    </tbody>
  </Grid>
);

function QuotePanel() {
  return (
    <Quote>
      <StockHead>
        <StockName>金龙羽 <small>002882</small></StockName>
        <LastPrice>
          <span>14.98</span>
          <span><svg width="20" height="19" viewBox="0 0 20 19"><path d="M0 0 H20 L12 19 H8 Z" fill={C.green} /></svg>-0.02</span>
          <span>-0.13%</span>
        </LastPrice>
      </StockHead>
      <AskBox><Depth data={ASKS} label="卖盘" /></AskBox>
      <DepthLine />
      <Section $h={139} $top={1}><Depth data={BIDS} label="买盘" /></Section>
      <Section $h={145}><Facts data={DAY} label="当日行情" /></Section>
      <Section $h={94} $top={1}><Facts data={BASICS} label="基本资料" /></Section>
      <Section $h={120}>
        <Grid $row={29} aria-label="资金流向">
          <colgroup><col style={{ width: 141 }} /><col style={{ width: 40 }} /><col /><col style={{ width: 65 }} /></colgroup>
          <tbody>
            {FLOWS.map(([l, w, v, p, c]) => (
              <tr key={l}>
                <Label scope="row">{mixed(l)}</Label>
                <td><FlowBar $c={c} style={{ width: w }} /></td>
                <Num $c={c} $pad={0}>{v}<span>万</span></Num>
                <Num $c={c} $pad={2}>{p}</Num>
              </tr>
            ))}
          </tbody>
        </Grid>
      </Section>
      <Ticks>
        <Grid $row={27} aria-label="分笔成交">
          <colgroup><col style={{ width: 80 }} /><col style={{ width: 78 }} /><col style={{ width: 94 }} /><col style={{ width: 44 }} /><col /></colgroup>
          <tbody>
            {TRADES.map(([t, p, v, s, n], i) => (
              <tr key={i}>
                <Time>{t}</Time><Num $c={C.green} $pad={0}>{p}</Num>
                <Num $c={v === "1168" ? C.magenta : C.yellow} $pad={0}>{v}</Num>
                <Side $c={s === "S" ? C.green : C.red}>{s === "-" ? "" : s}</Side>
                <Num $c={C.dim} $pad={2}>{n}</Num>
              </tr>
            ))}
          </tbody>
        </Grid>
      </Ticks>
      <QuoteTabs>{"笔价细势联值主筹".split("").map((t) => <button key={t}>{t}</button>)}</QuoteTabs>
    </Quote>
  );
}

/* ---------- status bar ---------- */
const INDICES = [
  ["上证", "2962.28", "-12.65", "-0.43%", "3460"],
  ["深证", "9401.35", "-123.34", "-1.29%", "4418"],
  ["中小", "5924.84", "-95.57", "-1.59%", "477.6"],
];
const Meter = ({ a, b, e }: { a: number; b: number; e: number }) => (
  <svg width="76" height="22" viewBox="0 0 76 22">
    <rect x="0" y="1" width="75" height="7" fill="#fafafa" />
    <rect x={a} y="1" width={b - a} height="7" fill="#f00" />
    <rect x={b} y="1" width={e - b} height="7" fill="#008000" />
    {[11, 16].map((y) => [0, 1, 2, 3, 4, 5].map((k) => <rect key={`${y}${k}`} x={5 + k * 12} y={y} width="9" height="3.500" fill="#008000" />))}
  </svg>
);

export default function App() {
  return (
    <Frame>
      <GlobalStyle />
      <Page>
        <TitleBar>
          <Logo />
          <TitleText>
            <AppName>通达信金融终端</AppName>
            <Menu $gap={36}>
              {["行情", "市场", "资讯", "数据", "专题", "发现", "交易", "行业", "热点"].map((m) => <button key={m}>{m}</button>)}
              <SmallButton>L1L2</SmallButton>
            </Menu>
            <Alerts><button>交易未登录</button><button>金龙羽</button></Alerts>
            <Menu $gap={21}>{["功能", "版面", "公式", "选项", "帮助"].map((m) => <button key={m}>{m}</button>)}</Menu>
          </TitleText>
          <Clock>15:45:23 <span>周二</span></Clock>
          <WindowButtons>
            <button aria-label="返回"><svg width="12" height="18" viewBox="0 0 12 18"><path d="M10 1 L3 9 L10 17" fill="none" stroke="#333" strokeWidth="2.500" /></svg></button>
            <button aria-label="最小化"><svg width="16" height="16" viewBox="0 0 16 16"><rect x="1" y="6" width="14" height="3" fill="#333" /></svg></button>
            <button aria-label="还原"><svg width="18" height="18" viewBox="0 0 18 18"><path d="M6 5 V2 H16 V11 H12 M2 6 H12 V16 H2 Z" fill="none" stroke="#222" strokeWidth="2.500" /></svg></button>
            <button aria-label="关闭"><svg width="17" height="17" viewBox="0 0 17 17"><path d="M2 1 L15 16 M15 1 L2 16" stroke="#333" strokeWidth="2.500" /></svg></button>
          </WindowButtons>
        </TitleBar>
        <Body>
          <Main>
            <Toolbar>
              <SideToggle aria-label="侧栏"><PanelIcon /></SideToggle>
              <Periods>
                {["分时", "1分钟", "5分钟", "15分钟", "30分钟", "60分钟", "日线", "周线", "月线", "多周期", "更多〉"].map((p) => <Period key={p} $on={p === "日线"}>{p}</Period>)}
              </Periods>
              <Tools>{["复权", "叠加", "统计", "画线", "F10", "标记", "-自选", "返回"].map((t) => <button key={t}>{t}</button>)}</Tools>
            </Toolbar>
            <Pane>
              <Legend $h={28}>
                <LegendText>
                  <LegendTitle $gap={7}><span>金龙羽(日线)</span><Chevron /></LegendTitle>
                  <Tint $c="#e8e8e8">MA5: 14.86</Tint>
                  <Tint $c="#f0f000">MA10: 14.65</Tint>
                  <Tint $c="#f000f0">MA20: 14.79</Tint>
                  <Tint $c="#00e600">MA60: 15.14</Tint>
                </LegendText>
                <LegendIcons><Diamond /><PanelIcon /></LegendIcons>
                <AxisHead />
              </Legend>
              <PriceChart />
            </Pane>
            <SubPane>
              <Legend $h={24}>
                <LegendText>
                  <LegendTitle $gap={5}><Chevron /><span>量力而为</span></LegendTitle>
                  <Tint $c="#f0f000">DX1: 23.72</Tint>
                  <Tint $c="#f000f0">DX2: 17.82</Tint>
                  <Tint $c="#00e0e0">DX3: 6.65</Tint>
                </LegendText>
                <AxisHead $boxed />
              </Legend>
              <IndicatorChart />
            </SubPane>
            <DateRow><DateAxis /><button>日线</button></DateRow>
            <TabRow $h={25} $pad="4px 5px 0">
              {["指标", "窗口", "MACD", "VOL-TDX", "CCI", "趋势动力", "主力监控", "私募主图", "MA2", "测试主图", "测试幅图A", "测试幅图B", "更多"].map((t) => <Tab key={t}>{t}</Tab>)}
              <Tab $c={C.cyan}>设置</Tab>
              <TabEnd $cols="46px 38px 38px"><Tab>模板</Tab><Tab>+</Tab><Tab>−</Tab></TabEnd>
            </TabRow>
            <TabRow $h={27} $pad="4px 6px 0 5px">
              <Tab>扩展<Caret>∧</Caret></Tab><Tab>关联报价</Tab><Tab>资金分布</Tab>
              <Tab $c={C.yellow}>综合资讯</Tab><Tab $c={C.yellow}>行业资讯</Tab><Tab $c={C.yellow}>互动问答</Tab>
              <Tab>普及版功能说明</Tab>
              <TabEnd $cols="72px 76px"><Tab $c={C.yellow}>图文F10</Tab><Tab $c={C.yellow}>侧边栏《</Tab></TabEnd>
            </TabRow>
          </Main>
          <QuotePanel />
          <IconBar aria-label="工具栏">
            <IconGroup $h={481}>{TOP_ICONS.map(([n, i]) => <BarButton key={n} aria-label={n}>{i}</BarButton>)}</IconGroup>
            <Rule />
            <IconGroup $h={178}>{MID_ICONS.map(([n, i]) => <BarButton key={n} aria-label={n}>{i}</BarButton>)}</IconGroup>
            <Rule />
            <IconGroup $h={485}>
              {LOW_ICONS.map(([n, i]) => <BarButton key={n} aria-label={n}>{i}</BarButton>)}
              {["1", "5", "15", "30", "60", "日", "周", "月", "N", "多", "季", "年"].map((t) => <BarButton key={t} $on={t === "日"}>{t}</BarButton>)}
            </IconGroup>
          </IconBar>
        </Body>
        <StatusBar>
          <StatusButton aria-label="行情主站">
            <svg width="20" height="22" viewBox="0 0 20 22"><rect width="20" height="22" rx="2" fill="#f5a623" /><rect x="3" y="4" width="14" height="14" fill="#fff3c8" /><rect x="5" y="7" width="9" height="8" fill="#f0a020" /></svg>
          </StatusButton>
          {INDICES.map(([n, v, d, p, t]) => (
            <Index key={n}><span>{n}</span><Down>{v}</Down><Down $mid>{d}</Down><Down $mid>{p}</Down><Turnover>{t}<small>亿</small></Turnover></Index>
          ))}
          <Meters><Meter a={22} b={36} e={53} /><Meter a={26} b={39} e={51} /></Meters>
          <Feed>平安证券北京上证云行情</Feed>
          <Tray width="150" height="24" viewBox="0 0 150 24">
            <rect x="1" y="6" width="22" height="15" fill="#fff" stroke="#2850e0" strokeWidth="2" />
            <rect x="30" y="3" width="20" height="18" fill="#fff" stroke="#888" strokeWidth="2" />
            <circle cx="67" cy="12" r="9" fill="#f0d800" />
            <path d="M90 6 h12 v12 l-8 -4 z M118 18 v-12 l6 6 h4 v8 z" fill="#888" />
          </Tray>
        </StatusBar>
      </Page>
      <Watermark><div>公式指标平台</div>Www.Gszb.Com</Watermark>
    </Frame>
  );
}
